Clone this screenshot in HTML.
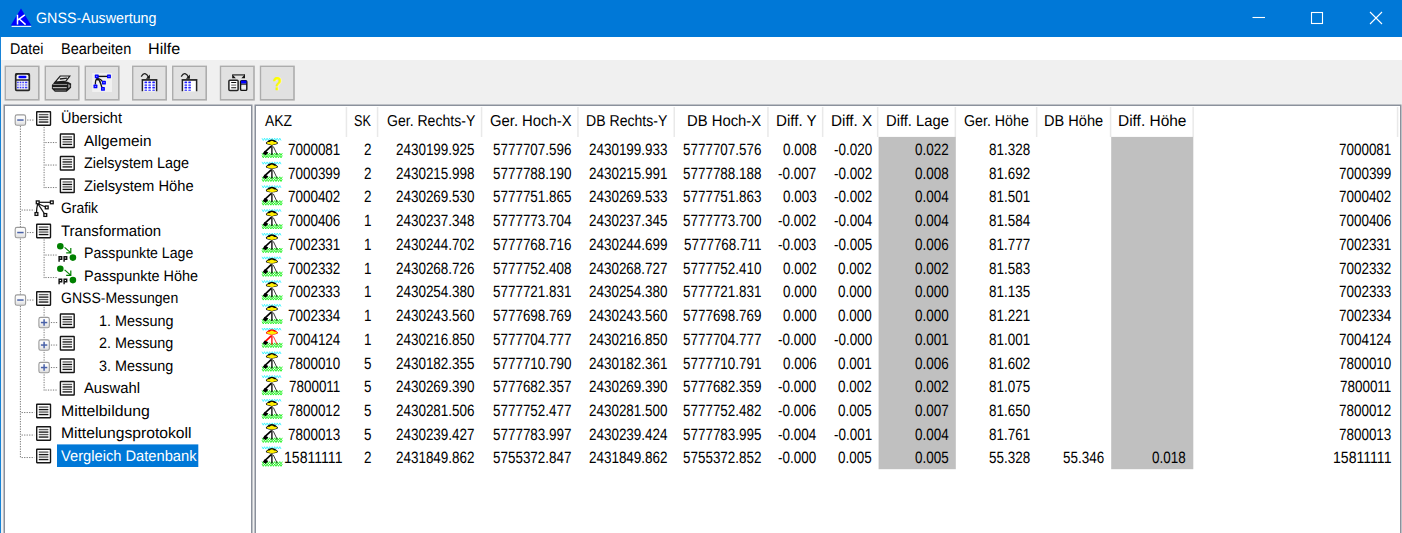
<!DOCTYPE html>
<html><head><meta charset="utf-8"><title>GNSS-Auswertung</title>
<style>
html,body{margin:0;padding:0}
body{width:1402px;height:533px;position:relative;overflow:hidden;background:#fff;font-family:"Liberation Sans", sans-serif;}
.a{position:absolute}
.t{position:absolute;white-space:pre;line-height:1;font-family:"Liberation Sans", sans-serif;}
svg{position:absolute;overflow:visible}
</style></head><body>
<div class="a" style="left:0;top:0;width:1402px;height:37px;background:#0078d7"></div>
<div class="a" style="left:0;top:37px;width:1px;height:496px;background:#1883d7"></div>
<div class="a" style="left:1px;top:37px;width:1401px;height:23px;background:#fff"></div>
<div class="a" style="left:1px;top:60px;width:1401px;height:473px;background:#f0f0f0"></div>
<svg class="a" style="left:0;top:0" width="1402" height="533" viewBox="0 0 1402 533">
<rect x="4.6" y="65.6" width="35" height="35" fill="#adadad"/><rect x="6.0" y="67" width="32" height="32" fill="#e1e1e1"/>
<rect x="44.6" y="65.6" width="35" height="35" fill="#adadad"/><rect x="46.0" y="67" width="32" height="32" fill="#e1e1e1"/>
<rect x="84.6" y="65.6" width="35" height="35" fill="#adadad"/><rect x="86.0" y="67" width="32" height="32" fill="#e1e1e1"/>
<rect x="132.0" y="65.6" width="35" height="35" fill="#adadad"/><rect x="133.4" y="67" width="32" height="32" fill="#e1e1e1"/>
<rect x="172.0" y="65.6" width="35" height="35" fill="#adadad"/><rect x="173.4" y="67" width="32" height="32" fill="#e1e1e1"/>
<rect x="219.8" y="65.6" width="35" height="35" fill="#adadad"/><rect x="221.2" y="67" width="32" height="32" fill="#e1e1e1"/>
<rect x="259.8" y="65.6" width="35" height="35" fill="#adadad"/><rect x="261.2" y="67" width="32" height="32" fill="#e1e1e1"/>
<rect x="4.25" y="105.25" width="247.5" height="440" fill="#fff" stroke="#8b919c" stroke-width="1.5"/>
<rect x="255.25" y="105.25" width="1145.5" height="440" fill="#fff" stroke="#8b919c" stroke-width="1.5"/>
<rect x="57" y="444.4" width="141.3" height="22.6" fill="#0078d7"/>
</svg>
<svg class="a" style="left:0;top:0" width="1402" height="533" viewBox="0 0 1402 533"><rect x="345.7" y="107" width="1.5" height="30" fill="#e9e9e9"/><rect x="376.8" y="107" width="1.5" height="30" fill="#e9e9e9"/><rect x="480.8" y="107" width="1.5" height="30" fill="#e9e9e9"/><rect x="577.2" y="107" width="1.5" height="30" fill="#e9e9e9"/><rect x="673.5" y="107" width="1.5" height="30" fill="#e9e9e9"/><rect x="767.2" y="107" width="1.5" height="30" fill="#e9e9e9"/><rect x="821.9" y="107" width="1.5" height="30" fill="#e9e9e9"/><rect x="876.9" y="107" width="1.5" height="30" fill="#e9e9e9"/><rect x="954.6" y="107" width="1.5" height="30" fill="#e9e9e9"/><rect x="1035.9" y="107" width="1.5" height="30" fill="#e9e9e9"/><rect x="1109.8" y="107" width="1.5" height="30" fill="#e9e9e9"/><rect x="1192.4" y="107" width="1.5" height="30" fill="#e9e9e9"/><rect x="1396.8" y="107" width="1.5" height="30" fill="#e9e9e9"/></svg>
<svg class="a" style="left:0;top:0" width="1402" height="533" viewBox="0 0 1402 533"><rect x="878.6" y="136.9" width="77.2" height="332.3" fill="#c0c0c0"/><rect x="1111.2" y="136.9" width="82.1" height="332.3" fill="#c0c0c0"/></svg>
<svg class="a" style="left:0;top:0" width="1402" height="533" viewBox="0 0 1402 533">
<defs><linearGradient id="eg" x1="0" y1="0" x2="0" y2="1"><stop offset="0" stop-color="#fff"/><stop offset="0.5" stop-color="#f6f6f6"/><stop offset="1" stop-color="#dcdcdc"/></linearGradient></defs>
<g><polygon points="21,8.6 31.3,25.6 10.7,25.6" fill="#0000ff"/><rect x="11.6" y="25.9" width="19.6" height="1" fill="#fff"/><path d="M17.5,14.8 V24.6 M17.7,20.2 L24.8,14.8 M19.6,19.2 L25.6,24.6" stroke="#fff" stroke-width="1.5" fill="none"/></g>
<g stroke="#fff" stroke-width="1.1" fill="none"><path d="M1252.5,17.5 H1265"/><rect x="1311.5" y="12.5" width="11" height="11"/><path d="M1370,12 L1382,24 M1382,12 L1370,24"/></g>
<g><rect x="15.7" y="73.9" width="13.6" height="16.4" rx="0.9" fill="#f3f3f6" stroke="#262626" stroke-width="1.7"/><path d="M15.6,73.4 h3 l-3,3.2 z M29.4,73.4 h-3 l3,3.2 z" fill="#262626"/><rect x="18.4" y="75.7" width="8.1" height="2.6" rx="1.2" fill="#0000ff"/><path d="M15.6,80 H29.4" stroke="#262626" stroke-width="1.5"/><rect x="17.1" y="81.7" width="1.6" height="1.5" fill="#2222ff" opacity="0.90"/><rect x="19.7" y="81.7" width="1.6" height="1.5" fill="#2222ff" opacity="0.90"/><rect x="22.3" y="81.7" width="1.6" height="1.5" fill="#2222ff" opacity="0.90"/><rect x="24.9" y="81.7" width="2.4" height="1.5" fill="#2222ff" opacity="0.90"/><rect x="17.1" y="84.2" width="1.6" height="1.5" fill="#2222ff" opacity="0.55"/><rect x="19.7" y="84.2" width="1.6" height="1.5" fill="#2222ff" opacity="0.55"/><rect x="22.3" y="84.2" width="1.6" height="1.5" fill="#2222ff" opacity="0.55"/><rect x="24.9" y="84.2" width="2.4" height="1.5" fill="#2222ff" opacity="0.55"/><rect x="17.1" y="86.8" width="1.6" height="1.5" fill="#2222ff" opacity="0.90"/><rect x="19.7" y="86.8" width="1.6" height="1.5" fill="#2222ff" opacity="0.90"/><rect x="22.3" y="86.8" width="1.6" height="1.5" fill="#2222ff" opacity="0.90"/><rect x="24.9" y="86.8" width="2.4" height="1.5" fill="#2222ff" opacity="0.90"/></g>
<g><polygon points="54.9,81.8 67.7,81.8 71.1,83.6 71.1,87.7 66.7,91.7 54.9,91.7 51.9,88.7 51.9,85.0" fill="#1c1c1c"/><polygon points="60.2,76.0 69.8,76.0 65.9,81.2 55.0,82.2" fill="#e8e8e8" stroke="#1c1c1c" stroke-width="1.2"/><path d="M59.8,79.0 L67.0,78.2" stroke="#1c1c1c" stroke-width="1.3"/><path d="M53.2,84.5 L67.2,84.5" stroke="#8e8e8e" stroke-width="1.1"/><path d="M52.8,87.7 L66.8,87.7" stroke="#f2f2f2" stroke-width="0.9"/><path d="M54.7,90.2 L66.1,90.2" stroke="#777" stroke-width="0.8"/><polygon points="68.1,83.9 70.2,84.9 70.2,87.1 68.1,88.2" fill="#8a8a8a"/></g>
<g><rect x="92.2" y="73" width="19.8" height="19" fill="#f0f0f0"/><path d="M96.7,76.4 H109.0" stroke="#111" stroke-width="1.4"/><path d="M97.6,78.6 Q100.8,78.6 102.6,81.8" stroke="#111" stroke-width="1.2" fill="none"/><path d="M96.8,78.8 Q95.3,80 95.4,84.6" stroke="#111" stroke-width="1.3" fill="none"/><path d="M97.4,78.6 Q100,80.5 101,84.5 T102.6,87.5" stroke="#111" stroke-width="1.3" fill="none"/><circle cx="97.2" cy="79.2" r="1.2" fill="#111"/><rect x="94.8" y="74.6" width="3.9" height="3.7" rx="0.6" fill="#0000ff"/><rect x="96.0" y="75.9" width="1.3" height="1" fill="#8a8aff"/><rect x="107.0" y="74.6" width="3.9" height="3.7" rx="0.6" fill="#0000ff"/><rect x="108.3" y="75.9" width="1.3" height="1" fill="#8a8aff"/><rect x="102.0" y="80.8" width="3.9" height="3.7" rx="0.6" fill="#0000ff"/><rect x="103.3" y="82.1" width="1.3" height="1" fill="#8a8aff"/><rect x="93.5" y="84.6" width="3.9" height="3.7" rx="0.6" fill="#0000ff"/><rect x="94.8" y="85.9" width="1.3" height="1" fill="#8a8aff"/><rect x="101.0" y="87.1" width="3.9" height="3.7" rx="0.6" fill="#0000ff"/><rect x="102.2" y="88.4" width="1.3" height="1" fill="#8a8aff"/></g>
<g><rect x="142.3" y="80" width="14.2" height="11.4" fill="#fff"/><path d="M142.4,91.2 V80 H156.6 V91.2" stroke="#222" stroke-width="1.5" fill="none"/><path d="M141.8,79.6 H157.2" stroke="#222" stroke-width="0.8"/><rect x="144.5" y="81.6" width="2.6" height="1.7" rx="0.5" fill="#1111ff" opacity="0.95"/><rect x="144.5" y="84.2" width="2.6" height="1.7" rx="0.5" fill="#1111ff" opacity="0.70"/><rect x="144.5" y="86.8" width="2.6" height="1.7" rx="0.5" fill="#1111ff" opacity="0.95"/><rect x="144.5" y="89.4" width="2.6" height="1.7" rx="0.5" fill="#1111ff" opacity="0.70"/><rect x="148.3" y="81.6" width="2.6" height="1.7" rx="0.5" fill="#1111ff" opacity="0.95"/><rect x="148.3" y="84.2" width="2.6" height="1.7" rx="0.5" fill="#1111ff" opacity="0.70"/><rect x="148.3" y="86.8" width="2.6" height="1.7" rx="0.5" fill="#1111ff" opacity="0.95"/><rect x="148.3" y="89.4" width="2.6" height="1.7" rx="0.5" fill="#1111ff" opacity="0.70"/><rect x="152.3" y="81.6" width="2.6" height="1.7" rx="0.5" fill="#1111ff" opacity="0.95"/><rect x="152.3" y="84.2" width="2.6" height="1.7" rx="0.5" fill="#1111ff" opacity="0.70"/><rect x="152.3" y="86.8" width="2.6" height="1.7" rx="0.5" fill="#1111ff" opacity="0.95"/><rect x="152.3" y="89.4" width="2.6" height="1.7" rx="0.5" fill="#1111ff" opacity="0.70"/><path d="M141.2,76.6 Q143.2,73.2 145.0,73.7 Q147.2,74.3 148.4,77.2" stroke="#222" stroke-width="1.25" fill="none"/><polygon points="149.9,74.6 149.9,78.7 145.9,78.7" fill="#111"/></g>
<g><rect x="182.3" y="80" width="14.2" height="11.4" fill="#fff"/><path d="M182.4,91.2 V80 H196.6 V91.2" stroke="#222" stroke-width="1.5" fill="none"/><path d="M181.8,79.6 H197.2" stroke="#222" stroke-width="0.8"/><rect x="184.5" y="81.6" width="2.6" height="1.7" rx="0.5" fill="#1111ff" opacity="0.95"/><rect x="184.5" y="84.2" width="2.6" height="1.7" rx="0.5" fill="#1111ff" opacity="0.70"/><rect x="184.5" y="86.8" width="2.6" height="1.7" rx="0.5" fill="#1111ff" opacity="0.95"/><rect x="184.5" y="89.4" width="2.6" height="1.7" rx="0.5" fill="#1111ff" opacity="0.70"/><rect x="188.3" y="81.6" width="2.6" height="1.7" rx="0.5" fill="#1111ff" opacity="0.95"/><rect x="188.3" y="84.2" width="2.6" height="1.7" rx="0.5" fill="#1111ff" opacity="0.70"/><rect x="188.3" y="86.8" width="2.6" height="1.7" rx="0.5" fill="#1111ff" opacity="0.95"/><rect x="188.3" y="89.4" width="2.6" height="1.7" rx="0.5" fill="#1111ff" opacity="0.70"/><path d="M181.2,76.6 Q183.2,73.2 185.0,73.7 Q187.2,74.3 188.4,77.2" stroke="#222" stroke-width="1.25" fill="none"/><polygon points="189.9,74.6 189.9,78.7 185.9,78.7" fill="#111"/></g>
<g><rect x="228.9" y="80.2" width="9.2" height="10.2" rx="1" fill="#fff" stroke="#222" stroke-width="1.5"/><path d="M231.2,82.5 H236.2 M231.2,87.7 H236.2" stroke="#111" stroke-width="1.1"/><path d="M231.2,85.1 H236.2" stroke="#777" stroke-width="1.2"/><rect x="240.6" y="80.6" width="6.2" height="9.8" rx="1.2" fill="#e6e6e6" stroke="#111" stroke-width="1.4"/><rect x="241" y="80.6" width="5.4" height="3" fill="#0000ff"/><path d="M240.6,84.2 H246.8" stroke="#111" stroke-width="1"/><path d="M241.4,87.2 H246" stroke="#fff" stroke-width="0.8"/><path d="M232.4,74.9 H245" stroke="#333" stroke-width="1.3"/><polygon points="232.2,74.2 232.2,78.2 235.8,78.2" fill="#111"/><polygon points="245,74.2 245,78.2 241.4,78.2" fill="#111"/></g>
<g><path d="M20.4,126.0 V458.1" stroke="#787878" stroke-width="1" stroke-dasharray="1.25 1.25" fill="none"/><path d="M44.1,126.9 V188.1" stroke="#787878" stroke-width="1" stroke-dasharray="1.25 1.25" fill="none"/><path d="M44.1,239.4 V278.1" stroke="#787878" stroke-width="1" stroke-dasharray="1.25 1.25" fill="none"/><path d="M44.1,306.9 V390.6" stroke="#787878" stroke-width="1" stroke-dasharray="1.25 1.25" fill="none"/><path d="M27.2,120.05 H34.3" stroke="#787878" stroke-width="1" stroke-dasharray="1.25 1.25" fill="none"/><path d="M21.6,210.05 H34.3" stroke="#787878" stroke-width="1" stroke-dasharray="1.25 1.25" fill="none"/><path d="M27.2,232.55 H34.3" stroke="#787878" stroke-width="1" stroke-dasharray="1.25 1.25" fill="none"/><path d="M27.2,300.05 H34.3" stroke="#787878" stroke-width="1" stroke-dasharray="1.25 1.25" fill="none"/><path d="M21.6,412.55 H34.3" stroke="#787878" stroke-width="1" stroke-dasharray="1.25 1.25" fill="none"/><path d="M21.6,435.05 H34.3" stroke="#787878" stroke-width="1" stroke-dasharray="1.25 1.25" fill="none"/><path d="M21.6,457.55 H34.3" stroke="#787878" stroke-width="1" stroke-dasharray="1.25 1.25" fill="none"/><path d="M45.4,142.55 H57.8" stroke="#787878" stroke-width="1" stroke-dasharray="1.25 1.25" fill="none"/><path d="M45.4,165.05 H57.8" stroke="#787878" stroke-width="1" stroke-dasharray="1.25 1.25" fill="none"/><path d="M45.4,187.55 H57.8" stroke="#787878" stroke-width="1" stroke-dasharray="1.25 1.25" fill="none"/><path d="M45.4,255.05 H57.8" stroke="#787878" stroke-width="1" stroke-dasharray="1.25 1.25" fill="none"/><path d="M45.4,277.55 H57.8" stroke="#787878" stroke-width="1" stroke-dasharray="1.25 1.25" fill="none"/><path d="M45.4,390.05 H57.8" stroke="#787878" stroke-width="1" stroke-dasharray="1.25 1.25" fill="none"/><path d="M50.9,322.55 H57.8" stroke="#787878" stroke-width="1" stroke-dasharray="1.25 1.25" fill="none"/><path d="M50.9,345.05 H57.8" stroke="#787878" stroke-width="1" stroke-dasharray="1.25 1.25" fill="none"/><path d="M50.9,367.55 H57.8" stroke="#787878" stroke-width="1" stroke-dasharray="1.25 1.25" fill="none"/><rect x="15.20" y="114.85" width="10.4" height="10.4" rx="1.8" fill="url(#eg)" stroke="#9a9a9a" stroke-width="1.1"/><path d="M17.20,120.05 H23.60" stroke="#4a62a8" stroke-width="1.5"/><rect x="15.20" y="227.35" width="10.4" height="10.4" rx="1.8" fill="url(#eg)" stroke="#9a9a9a" stroke-width="1.1"/><path d="M17.20,232.55 H23.60" stroke="#4a62a8" stroke-width="1.5"/><rect x="15.20" y="294.85" width="10.4" height="10.4" rx="1.8" fill="url(#eg)" stroke="#9a9a9a" stroke-width="1.1"/><path d="M17.20,300.05 H23.60" stroke="#4a62a8" stroke-width="1.5"/><rect x="38.90" y="317.35" width="10.4" height="10.4" rx="1.8" fill="url(#eg)" stroke="#9a9a9a" stroke-width="1.1"/><path d="M40.90,322.55 H47.30" stroke="#4a62a8" stroke-width="1.5"/><path d="M44.10,319.35 V325.75" stroke="#4a62a8" stroke-width="1.5"/><rect x="38.90" y="339.85" width="10.4" height="10.4" rx="1.8" fill="url(#eg)" stroke="#9a9a9a" stroke-width="1.1"/><path d="M40.90,345.05 H47.30" stroke="#4a62a8" stroke-width="1.5"/><path d="M44.10,341.85 V348.25" stroke="#4a62a8" stroke-width="1.5"/><rect x="38.90" y="362.35" width="10.4" height="10.4" rx="1.8" fill="url(#eg)" stroke="#9a9a9a" stroke-width="1.1"/><path d="M40.90,367.55 H47.30" stroke="#4a62a8" stroke-width="1.5"/><path d="M44.10,364.35 V370.75" stroke="#4a62a8" stroke-width="1.5"/><rect x="36.70" y="111.70" width="13.8" height="13.5" rx="0.35" fill="#fff" stroke="#161616" stroke-width="1.4"/><path d="M38.80,114.60 H48.40" stroke="#5a5a5a" stroke-width="1.35"/><path d="M38.80,117.10 H48.40" stroke="#161616" stroke-width="1.35"/><path d="M38.80,119.55 H48.40" stroke="#5a5a5a" stroke-width="1.35"/><path d="M38.80,122.05 H48.40" stroke="#161616" stroke-width="1.35"/><rect x="36.70" y="224.20" width="13.8" height="13.5" rx="0.35" fill="#fff" stroke="#161616" stroke-width="1.4"/><path d="M38.80,227.10 H48.40" stroke="#5a5a5a" stroke-width="1.35"/><path d="M38.80,229.60 H48.40" stroke="#161616" stroke-width="1.35"/><path d="M38.80,232.05 H48.40" stroke="#5a5a5a" stroke-width="1.35"/><path d="M38.80,234.55 H48.40" stroke="#161616" stroke-width="1.35"/><rect x="36.70" y="291.70" width="13.8" height="13.5" rx="0.35" fill="#fff" stroke="#161616" stroke-width="1.4"/><path d="M38.80,294.60 H48.40" stroke="#5a5a5a" stroke-width="1.35"/><path d="M38.80,297.10 H48.40" stroke="#161616" stroke-width="1.35"/><path d="M38.80,299.55 H48.40" stroke="#5a5a5a" stroke-width="1.35"/><path d="M38.80,302.05 H48.40" stroke="#161616" stroke-width="1.35"/><rect x="36.70" y="404.20" width="13.8" height="13.5" rx="0.35" fill="#fff" stroke="#161616" stroke-width="1.4"/><path d="M38.80,407.10 H48.40" stroke="#5a5a5a" stroke-width="1.35"/><path d="M38.80,409.60 H48.40" stroke="#161616" stroke-width="1.35"/><path d="M38.80,412.05 H48.40" stroke="#5a5a5a" stroke-width="1.35"/><path d="M38.80,414.55 H48.40" stroke="#161616" stroke-width="1.35"/><rect x="36.70" y="426.70" width="13.8" height="13.5" rx="0.35" fill="#fff" stroke="#161616" stroke-width="1.4"/><path d="M38.80,429.60 H48.40" stroke="#5a5a5a" stroke-width="1.35"/><path d="M38.80,432.10 H48.40" stroke="#161616" stroke-width="1.35"/><path d="M38.80,434.55 H48.40" stroke="#5a5a5a" stroke-width="1.35"/><path d="M38.80,437.05 H48.40" stroke="#161616" stroke-width="1.35"/><rect x="36.70" y="449.20" width="13.8" height="13.5" rx="0.35" fill="#fff" stroke="#161616" stroke-width="1.4"/><path d="M38.80,452.10 H48.40" stroke="#5a5a5a" stroke-width="1.35"/><path d="M38.80,454.60 H48.40" stroke="#161616" stroke-width="1.35"/><path d="M38.80,457.05 H48.40" stroke="#5a5a5a" stroke-width="1.35"/><path d="M38.80,459.55 H48.40" stroke="#161616" stroke-width="1.35"/><rect x="60.40" y="134.05" width="13.8" height="13.5" rx="0.35" fill="#fff" stroke="#161616" stroke-width="1.4"/><path d="M62.50,136.95 H72.10" stroke="#5a5a5a" stroke-width="1.35"/><path d="M62.50,139.45 H72.10" stroke="#161616" stroke-width="1.35"/><path d="M62.50,141.90 H72.10" stroke="#5a5a5a" stroke-width="1.35"/><path d="M62.50,144.40 H72.10" stroke="#161616" stroke-width="1.35"/><rect x="60.40" y="156.55" width="13.8" height="13.5" rx="0.35" fill="#fff" stroke="#161616" stroke-width="1.4"/><path d="M62.50,159.45 H72.10" stroke="#5a5a5a" stroke-width="1.35"/><path d="M62.50,161.95 H72.10" stroke="#161616" stroke-width="1.35"/><path d="M62.50,164.40 H72.10" stroke="#5a5a5a" stroke-width="1.35"/><path d="M62.50,166.90 H72.10" stroke="#161616" stroke-width="1.35"/><rect x="60.40" y="179.05" width="13.8" height="13.5" rx="0.35" fill="#fff" stroke="#161616" stroke-width="1.4"/><path d="M62.50,181.95 H72.10" stroke="#5a5a5a" stroke-width="1.35"/><path d="M62.50,184.45 H72.10" stroke="#161616" stroke-width="1.35"/><path d="M62.50,186.90 H72.10" stroke="#5a5a5a" stroke-width="1.35"/><path d="M62.50,189.40 H72.10" stroke="#161616" stroke-width="1.35"/><rect x="60.40" y="314.05" width="13.8" height="13.5" rx="0.35" fill="#fff" stroke="#161616" stroke-width="1.4"/><path d="M62.50,316.95 H72.10" stroke="#5a5a5a" stroke-width="1.35"/><path d="M62.50,319.45 H72.10" stroke="#161616" stroke-width="1.35"/><path d="M62.50,321.90 H72.10" stroke="#5a5a5a" stroke-width="1.35"/><path d="M62.50,324.40 H72.10" stroke="#161616" stroke-width="1.35"/><rect x="60.40" y="336.55" width="13.8" height="13.5" rx="0.35" fill="#fff" stroke="#161616" stroke-width="1.4"/><path d="M62.50,339.45 H72.10" stroke="#5a5a5a" stroke-width="1.35"/><path d="M62.50,341.95 H72.10" stroke="#161616" stroke-width="1.35"/><path d="M62.50,344.40 H72.10" stroke="#5a5a5a" stroke-width="1.35"/><path d="M62.50,346.90 H72.10" stroke="#161616" stroke-width="1.35"/><rect x="60.40" y="359.05" width="13.8" height="13.5" rx="0.35" fill="#fff" stroke="#161616" stroke-width="1.4"/><path d="M62.50,361.95 H72.10" stroke="#5a5a5a" stroke-width="1.35"/><path d="M62.50,364.45 H72.10" stroke="#161616" stroke-width="1.35"/><path d="M62.50,366.90 H72.10" stroke="#5a5a5a" stroke-width="1.35"/><path d="M62.50,369.40 H72.10" stroke="#161616" stroke-width="1.35"/><rect x="60.40" y="381.55" width="13.8" height="13.5" rx="0.35" fill="#fff" stroke="#161616" stroke-width="1.4"/><path d="M62.50,384.45 H72.10" stroke="#5a5a5a" stroke-width="1.35"/><path d="M62.50,386.95 H72.10" stroke="#161616" stroke-width="1.35"/><path d="M62.50,389.40 H72.10" stroke="#5a5a5a" stroke-width="1.35"/><path d="M62.50,391.90 H72.10" stroke="#161616" stroke-width="1.35"/><path d="M37.7,202.3 L51.8,202.3" stroke="#111" stroke-width="1.2"/><path d="M38.2,203.8 L46.7,207.4" stroke="#111" stroke-width="1.1"/><path d="M38.0,203.8 L45.3,215.0" stroke="#111" stroke-width="1.2"/><path d="M37.7,203.8 Q36.6,207.3 36.4,214.0" stroke="#111" stroke-width="1.2" fill="none"/><rect x="36.30" y="200.93" width="2.8" height="2.8" fill="#fff" stroke="#111" stroke-width="1.3"/><rect x="50.41" y="200.93" width="2.8" height="2.8" fill="#fff" stroke="#111" stroke-width="1.3"/><rect x="45.34" y="206.00" width="2.8" height="2.8" fill="#fff" stroke="#111" stroke-width="1.3"/><rect x="35.04" y="212.59" width="2.8" height="2.8" fill="#fff" stroke="#111" stroke-width="1.3"/><rect x="43.90" y="213.60" width="2.8" height="2.8" fill="#fff" stroke="#111" stroke-width="1.3"/><circle cx="60.3" cy="246.30" r="3.3" fill="#008000"/><circle cx="72.9" cy="257.60" r="3.3" fill="#008000"/><path d="M64.6,247.40 L70.6,252.60 M70.8,248.00 V252.80 H66.2" stroke="#008000" stroke-width="1.2" fill="none"/><path d="M59.10,261.80 V256.70 H61.70 V259.30 H59.10" stroke="#111" stroke-width="1.4" fill="none"/><path d="M64.10,261.80 V256.70 H66.70 V259.30 H64.10" stroke="#111" stroke-width="1.4" fill="none"/><circle cx="60.3" cy="268.80" r="3.3" fill="#008000"/><circle cx="72.9" cy="280.10" r="3.3" fill="#008000"/><path d="M64.6,269.90 L70.6,275.10 M70.8,270.50 V275.30 H66.2" stroke="#008000" stroke-width="1.2" fill="none"/><path d="M59.10,284.30 V279.20 H61.70 V281.80 H59.10" stroke="#111" stroke-width="1.4" fill="none"/><path d="M64.10,284.30 V279.20 H66.70 V281.80 H64.10" stroke="#111" stroke-width="1.4" fill="none"/></g>
<g><polyline points="262.0,138.2 263.3,140.5 264.5,138.2 265.8,140.5 267.1,138.2 268.3,140.5 269.6,138.2 270.9,140.5 272.2,138.2 273.4,140.5 274.7,138.2 276.0,140.5 277.2,138.2 278.5,140.5 279.8,138.2 281.0,140.5" stroke="#00f0ff" stroke-width="0.9" fill="none" opacity="0.75"/><polyline points="262.0,153.1 263.3,155.4 264.5,153.1 265.8,155.4 267.1,153.1 268.3,155.4 269.6,153.1 270.9,155.4 272.2,153.1 273.4,155.4 274.7,153.1 276.0,155.4 277.2,153.1 278.5,155.4 279.8,153.1 281.0,155.4 282.3,153.1" stroke="#00f000" stroke-width="0.8" fill="none"/><polyline points="262.0,155.5 263.3,157.8 264.5,155.5 265.8,157.8 267.1,155.5 268.3,157.8 269.6,155.5 270.9,157.8 272.2,155.5 273.4,157.8 274.7,155.5 276.0,157.8 277.2,155.5 278.5,157.8 279.8,155.5 281.0,157.8 282.3,155.5" stroke="#00f000" stroke-width="0.8" fill="none"/><path d="M265.8,142.7 Q271.9,136.1 278,142.7 L277.4,144.0 Q271.9,145.9 266.4,144.0 z" fill="#000"/><ellipse cx="271.9" cy="143.0" rx="5.2" ry="1.25" fill="#ffee00"/><circle cx="271.9" cy="142.9" r="2.1" fill="#ffee00"/><path d="M271.9,145.1 V154.9" stroke="#000" stroke-width="1.3"/><path d="M271.2,146.1 L264.4,152.5" stroke="#000" stroke-width="1.7"/><path d="M273.3,146.5 L277.3,154.9" stroke="#000" stroke-width="0.9" opacity="0.85"/><polygon points="264.8,150.7 268.4,152.5 265.6,155.3 262.7,153.5" fill="#000"/><polyline points="262.0,161.9 263.3,164.2 264.5,161.9 265.8,164.2 267.1,161.9 268.3,164.2 269.6,161.9 270.9,164.2 272.2,161.9 273.4,164.2 274.7,161.9 276.0,164.2 277.2,161.9 278.5,164.2 279.8,161.9 281.0,164.2" stroke="#00f0ff" stroke-width="0.9" fill="none" opacity="0.75"/><polyline points="262.0,176.8 263.3,179.1 264.5,176.8 265.8,179.1 267.1,176.8 268.3,179.1 269.6,176.8 270.9,179.1 272.2,176.8 273.4,179.1 274.7,176.8 276.0,179.1 277.2,176.8 278.5,179.1 279.8,176.8 281.0,179.1 282.3,176.8" stroke="#00f000" stroke-width="0.8" fill="none"/><polyline points="262.0,179.2 263.3,181.5 264.5,179.2 265.8,181.5 267.1,179.2 268.3,181.5 269.6,179.2 270.9,181.5 272.2,179.2 273.4,181.5 274.7,179.2 276.0,181.5 277.2,179.2 278.5,181.5 279.8,179.2 281.0,181.5 282.3,179.2" stroke="#00f000" stroke-width="0.8" fill="none"/><path d="M265.8,166.4 Q271.9,159.8 278,166.4 L277.4,167.7 Q271.9,169.6 266.4,167.7 z" fill="#000"/><ellipse cx="271.9" cy="166.7" rx="5.2" ry="1.25" fill="#ffee00"/><circle cx="271.9" cy="166.6" r="2.1" fill="#ffee00"/><path d="M271.9,168.8 V178.6" stroke="#000" stroke-width="1.3"/><path d="M271.2,169.8 L264.4,176.2" stroke="#000" stroke-width="1.7"/><path d="M273.3,170.2 L277.3,178.6" stroke="#000" stroke-width="0.9" opacity="0.85"/><polygon points="264.8,174.4 268.4,176.2 265.6,179.0 262.7,177.2" fill="#000"/><polyline points="262.0,185.6 263.3,187.9 264.5,185.6 265.8,187.9 267.1,185.6 268.3,187.9 269.6,185.6 270.9,187.9 272.2,185.6 273.4,187.9 274.7,185.6 276.0,187.9 277.2,185.6 278.5,187.9 279.8,185.6 281.0,187.9" stroke="#00f0ff" stroke-width="0.9" fill="none" opacity="0.75"/><polyline points="262.0,200.5 263.3,202.8 264.5,200.5 265.8,202.8 267.1,200.5 268.3,202.8 269.6,200.5 270.9,202.8 272.2,200.5 273.4,202.8 274.7,200.5 276.0,202.8 277.2,200.5 278.5,202.8 279.8,200.5 281.0,202.8 282.3,200.5" stroke="#00f000" stroke-width="0.8" fill="none"/><polyline points="262.0,202.9 263.3,205.2 264.5,202.9 265.8,205.2 267.1,202.9 268.3,205.2 269.6,202.9 270.9,205.2 272.2,202.9 273.4,205.2 274.7,202.9 276.0,205.2 277.2,202.9 278.5,205.2 279.8,202.9 281.0,205.2 282.3,202.9" stroke="#00f000" stroke-width="0.8" fill="none"/><path d="M265.8,190.1 Q271.9,183.5 278,190.1 L277.4,191.4 Q271.9,193.3 266.4,191.4 z" fill="#000"/><ellipse cx="271.9" cy="190.4" rx="5.2" ry="1.25" fill="#ffee00"/><circle cx="271.9" cy="190.3" r="2.1" fill="#ffee00"/><path d="M271.9,192.5 V202.3" stroke="#000" stroke-width="1.3"/><path d="M271.2,193.5 L264.4,199.9" stroke="#000" stroke-width="1.7"/><path d="M273.3,193.9 L277.3,202.3" stroke="#000" stroke-width="0.9" opacity="0.85"/><polygon points="264.8,198.1 268.4,199.9 265.6,202.7 262.7,200.9" fill="#000"/><polyline points="262.0,209.4 263.3,211.7 264.5,209.4 265.8,211.7 267.1,209.4 268.3,211.7 269.6,209.4 270.9,211.7 272.2,209.4 273.4,211.7 274.7,209.4 276.0,211.7 277.2,209.4 278.5,211.7 279.8,209.4 281.0,211.7" stroke="#00f0ff" stroke-width="0.9" fill="none" opacity="0.75"/><polyline points="262.0,224.3 263.3,226.6 264.5,224.3 265.8,226.6 267.1,224.3 268.3,226.6 269.6,224.3 270.9,226.6 272.2,224.3 273.4,226.6 274.7,224.3 276.0,226.6 277.2,224.3 278.5,226.6 279.8,224.3 281.0,226.6 282.3,224.3" stroke="#00f000" stroke-width="0.8" fill="none"/><polyline points="262.0,226.7 263.3,229.0 264.5,226.7 265.8,229.0 267.1,226.7 268.3,229.0 269.6,226.7 270.9,229.0 272.2,226.7 273.4,229.0 274.7,226.7 276.0,229.0 277.2,226.7 278.5,229.0 279.8,226.7 281.0,229.0 282.3,226.7" stroke="#00f000" stroke-width="0.8" fill="none"/><path d="M265.8,213.9 Q271.9,207.3 278,213.9 L277.4,215.2 Q271.9,217.1 266.4,215.2 z" fill="#000"/><ellipse cx="271.9" cy="214.2" rx="5.2" ry="1.25" fill="#ffee00"/><circle cx="271.9" cy="214.1" r="2.1" fill="#ffee00"/><path d="M271.9,216.3 V226.1" stroke="#000" stroke-width="1.3"/><path d="M271.2,217.3 L264.4,223.7" stroke="#000" stroke-width="1.7"/><path d="M273.3,217.7 L277.3,226.1" stroke="#000" stroke-width="0.9" opacity="0.85"/><polygon points="264.8,221.9 268.4,223.7 265.6,226.5 262.7,224.7" fill="#000"/><polyline points="262.0,233.1 263.3,235.4 264.5,233.1 265.8,235.4 267.1,233.1 268.3,235.4 269.6,233.1 270.9,235.4 272.2,233.1 273.4,235.4 274.7,233.1 276.0,235.4 277.2,233.1 278.5,235.4 279.8,233.1 281.0,235.4" stroke="#00f0ff" stroke-width="0.9" fill="none" opacity="0.75"/><polyline points="262.0,248.0 263.3,250.3 264.5,248.0 265.8,250.3 267.1,248.0 268.3,250.3 269.6,248.0 270.9,250.3 272.2,248.0 273.4,250.3 274.7,248.0 276.0,250.3 277.2,248.0 278.5,250.3 279.8,248.0 281.0,250.3 282.3,248.0" stroke="#00f000" stroke-width="0.8" fill="none"/><polyline points="262.0,250.4 263.3,252.7 264.5,250.4 265.8,252.7 267.1,250.4 268.3,252.7 269.6,250.4 270.9,252.7 272.2,250.4 273.4,252.7 274.7,250.4 276.0,252.7 277.2,250.4 278.5,252.7 279.8,250.4 281.0,252.7 282.3,250.4" stroke="#00f000" stroke-width="0.8" fill="none"/><path d="M265.8,237.6 Q271.9,231.0 278,237.6 L277.4,238.9 Q271.9,240.8 266.4,238.9 z" fill="#000"/><ellipse cx="271.9" cy="237.9" rx="5.2" ry="1.25" fill="#ffee00"/><circle cx="271.9" cy="237.8" r="2.1" fill="#ffee00"/><path d="M271.9,240.0 V249.8" stroke="#000" stroke-width="1.3"/><path d="M271.2,241.0 L264.4,247.4" stroke="#000" stroke-width="1.7"/><path d="M273.3,241.4 L277.3,249.8" stroke="#000" stroke-width="0.9" opacity="0.85"/><polygon points="264.8,245.6 268.4,247.4 265.6,250.2 262.7,248.4" fill="#000"/><polyline points="262.0,256.8 263.3,259.1 264.5,256.8 265.8,259.1 267.1,256.8 268.3,259.1 269.6,256.8 270.9,259.1 272.2,256.8 273.4,259.1 274.7,256.8 276.0,259.1 277.2,256.8 278.5,259.1 279.8,256.8 281.0,259.1" stroke="#00f0ff" stroke-width="0.9" fill="none" opacity="0.75"/><polyline points="262.0,271.7 263.3,274.0 264.5,271.7 265.8,274.0 267.1,271.7 268.3,274.0 269.6,271.7 270.9,274.0 272.2,271.7 273.4,274.0 274.7,271.7 276.0,274.0 277.2,271.7 278.5,274.0 279.8,271.7 281.0,274.0 282.3,271.7" stroke="#00f000" stroke-width="0.8" fill="none"/><polyline points="262.0,274.1 263.3,276.4 264.5,274.1 265.8,276.4 267.1,274.1 268.3,276.4 269.6,274.1 270.9,276.4 272.2,274.1 273.4,276.4 274.7,274.1 276.0,276.4 277.2,274.1 278.5,276.4 279.8,274.1 281.0,276.4 282.3,274.1" stroke="#00f000" stroke-width="0.8" fill="none"/><path d="M265.8,261.3 Q271.9,254.7 278,261.3 L277.4,262.6 Q271.9,264.5 266.4,262.6 z" fill="#000"/><ellipse cx="271.9" cy="261.6" rx="5.2" ry="1.25" fill="#ffee00"/><circle cx="271.9" cy="261.5" r="2.1" fill="#ffee00"/><path d="M271.9,263.7 V273.5" stroke="#000" stroke-width="1.3"/><path d="M271.2,264.7 L264.4,271.1" stroke="#000" stroke-width="1.7"/><path d="M273.3,265.1 L277.3,273.5" stroke="#000" stroke-width="0.9" opacity="0.85"/><polygon points="264.8,269.3 268.4,271.1 265.6,273.9 262.7,272.1" fill="#000"/><polyline points="262.0,280.5 263.3,282.8 264.5,280.5 265.8,282.8 267.1,280.5 268.3,282.8 269.6,280.5 270.9,282.8 272.2,280.5 273.4,282.8 274.7,280.5 276.0,282.8 277.2,280.5 278.5,282.8 279.8,280.5 281.0,282.8" stroke="#00f0ff" stroke-width="0.9" fill="none" opacity="0.75"/><polyline points="262.0,295.4 263.3,297.7 264.5,295.4 265.8,297.7 267.1,295.4 268.3,297.7 269.6,295.4 270.9,297.7 272.2,295.4 273.4,297.7 274.7,295.4 276.0,297.7 277.2,295.4 278.5,297.7 279.8,295.4 281.0,297.7 282.3,295.4" stroke="#00f000" stroke-width="0.8" fill="none"/><polyline points="262.0,297.8 263.3,300.1 264.5,297.8 265.8,300.1 267.1,297.8 268.3,300.1 269.6,297.8 270.9,300.1 272.2,297.8 273.4,300.1 274.7,297.8 276.0,300.1 277.2,297.8 278.5,300.1 279.8,297.8 281.0,300.1 282.3,297.8" stroke="#00f000" stroke-width="0.8" fill="none"/><path d="M265.8,285.0 Q271.9,278.4 278,285.0 L277.4,286.3 Q271.9,288.2 266.4,286.3 z" fill="#000"/><ellipse cx="271.9" cy="285.3" rx="5.2" ry="1.25" fill="#ffee00"/><circle cx="271.9" cy="285.2" r="2.1" fill="#ffee00"/><path d="M271.9,287.4 V297.2" stroke="#000" stroke-width="1.3"/><path d="M271.2,288.4 L264.4,294.8" stroke="#000" stroke-width="1.7"/><path d="M273.3,288.8 L277.3,297.2" stroke="#000" stroke-width="0.9" opacity="0.85"/><polygon points="264.8,293.0 268.4,294.8 265.6,297.6 262.7,295.8" fill="#000"/><polyline points="262.0,304.3 263.3,306.6 264.5,304.3 265.8,306.6 267.1,304.3 268.3,306.6 269.6,304.3 270.9,306.6 272.2,304.3 273.4,306.6 274.7,304.3 276.0,306.6 277.2,304.3 278.5,306.6 279.8,304.3 281.0,306.6" stroke="#00f0ff" stroke-width="0.9" fill="none" opacity="0.75"/><polyline points="262.0,319.2 263.3,321.5 264.5,319.2 265.8,321.5 267.1,319.2 268.3,321.5 269.6,319.2 270.9,321.5 272.2,319.2 273.4,321.5 274.7,319.2 276.0,321.5 277.2,319.2 278.5,321.5 279.8,319.2 281.0,321.5 282.3,319.2" stroke="#00f000" stroke-width="0.8" fill="none"/><polyline points="262.0,321.6 263.3,323.9 264.5,321.6 265.8,323.9 267.1,321.6 268.3,323.9 269.6,321.6 270.9,323.9 272.2,321.6 273.4,323.9 274.7,321.6 276.0,323.9 277.2,321.6 278.5,323.9 279.8,321.6 281.0,323.9 282.3,321.6" stroke="#00f000" stroke-width="0.8" fill="none"/><path d="M265.8,308.8 Q271.9,302.2 278,308.8 L277.4,310.1 Q271.9,312.0 266.4,310.1 z" fill="#000"/><ellipse cx="271.9" cy="309.1" rx="5.2" ry="1.25" fill="#ffee00"/><circle cx="271.9" cy="309.0" r="2.1" fill="#ffee00"/><path d="M271.9,311.2 V321.0" stroke="#000" stroke-width="1.3"/><path d="M271.2,312.2 L264.4,318.6" stroke="#000" stroke-width="1.7"/><path d="M273.3,312.6 L277.3,321.0" stroke="#000" stroke-width="0.9" opacity="0.85"/><polygon points="264.8,316.8 268.4,318.6 265.6,321.4 262.7,319.6" fill="#000"/><polyline points="262.0,328.0 263.3,330.3 264.5,328.0 265.8,330.3 267.1,328.0 268.3,330.3 269.6,328.0 270.9,330.3 272.2,328.0 273.4,330.3 274.7,328.0 276.0,330.3 277.2,328.0 278.5,330.3 279.8,328.0 281.0,330.3" stroke="#00f0ff" stroke-width="0.9" fill="none" opacity="0.75"/><polyline points="262.0,342.9 263.3,345.2 264.5,342.9 265.8,345.2 267.1,342.9 268.3,345.2 269.6,342.9 270.9,345.2 272.2,342.9 273.4,345.2 274.7,342.9 276.0,345.2 277.2,342.9 278.5,345.2 279.8,342.9 281.0,345.2 282.3,342.9" stroke="#00f000" stroke-width="0.8" fill="none"/><polyline points="262.0,345.3 263.3,347.6 264.5,345.3 265.8,347.6 267.1,345.3 268.3,347.6 269.6,345.3 270.9,347.6 272.2,345.3 273.4,347.6 274.7,345.3 276.0,347.6 277.2,345.3 278.5,347.6 279.8,345.3 281.0,347.6 282.3,345.3" stroke="#00f000" stroke-width="0.8" fill="none"/><path d="M265.8,332.5 Q271.9,325.9 278,332.5 L277.4,333.8 Q271.9,335.7 266.4,333.8 z" fill="#ff0000"/><ellipse cx="271.9" cy="332.8" rx="5.2" ry="1.25" fill="#ffee00"/><circle cx="271.9" cy="332.7" r="2.1" fill="#ffee00"/><path d="M271.9,334.9 V344.7" stroke="#ff0000" stroke-width="1.3"/><path d="M271.2,335.9 L264.4,342.3" stroke="#ff0000" stroke-width="1.7"/><path d="M273.3,336.3 L277.3,344.7" stroke="#ff0000" stroke-width="0.9" opacity="0.85"/><polygon points="264.8,340.5 268.4,342.3 265.6,345.1 262.7,343.3" fill="#000"/><polyline points="262.0,351.7 263.3,354.0 264.5,351.7 265.8,354.0 267.1,351.7 268.3,354.0 269.6,351.7 270.9,354.0 272.2,351.7 273.4,354.0 274.7,351.7 276.0,354.0 277.2,351.7 278.5,354.0 279.8,351.7 281.0,354.0" stroke="#00f0ff" stroke-width="0.9" fill="none" opacity="0.75"/><polyline points="262.0,366.6 263.3,368.9 264.5,366.6 265.8,368.9 267.1,366.6 268.3,368.9 269.6,366.6 270.9,368.9 272.2,366.6 273.4,368.9 274.7,366.6 276.0,368.9 277.2,366.6 278.5,368.9 279.8,366.6 281.0,368.9 282.3,366.6" stroke="#00f000" stroke-width="0.8" fill="none"/><polyline points="262.0,369.0 263.3,371.3 264.5,369.0 265.8,371.3 267.1,369.0 268.3,371.3 269.6,369.0 270.9,371.3 272.2,369.0 273.4,371.3 274.7,369.0 276.0,371.3 277.2,369.0 278.5,371.3 279.8,369.0 281.0,371.3 282.3,369.0" stroke="#00f000" stroke-width="0.8" fill="none"/><path d="M265.8,356.2 Q271.9,349.6 278,356.2 L277.4,357.5 Q271.9,359.4 266.4,357.5 z" fill="#000"/><ellipse cx="271.9" cy="356.5" rx="5.2" ry="1.25" fill="#ffee00"/><circle cx="271.9" cy="356.4" r="2.1" fill="#ffee00"/><path d="M271.9,358.6 V368.4" stroke="#000" stroke-width="1.3"/><path d="M271.2,359.6 L264.4,366.0" stroke="#000" stroke-width="1.7"/><path d="M273.3,360.0 L277.3,368.4" stroke="#000" stroke-width="0.9" opacity="0.85"/><polygon points="264.8,364.2 268.4,366.0 265.6,368.8 262.7,367.0" fill="#000"/><polyline points="262.0,375.5 263.3,377.8 264.5,375.5 265.8,377.8 267.1,375.5 268.3,377.8 269.6,375.5 270.9,377.8 272.2,375.5 273.4,377.8 274.7,375.5 276.0,377.8 277.2,375.5 278.5,377.8 279.8,375.5 281.0,377.8" stroke="#00f0ff" stroke-width="0.9" fill="none" opacity="0.75"/><polyline points="262.0,390.4 263.3,392.7 264.5,390.4 265.8,392.7 267.1,390.4 268.3,392.7 269.6,390.4 270.9,392.7 272.2,390.4 273.4,392.7 274.7,390.4 276.0,392.7 277.2,390.4 278.5,392.7 279.8,390.4 281.0,392.7 282.3,390.4" stroke="#00f000" stroke-width="0.8" fill="none"/><polyline points="262.0,392.8 263.3,395.1 264.5,392.8 265.8,395.1 267.1,392.8 268.3,395.1 269.6,392.8 270.9,395.1 272.2,392.8 273.4,395.1 274.7,392.8 276.0,395.1 277.2,392.8 278.5,395.1 279.8,392.8 281.0,395.1 282.3,392.8" stroke="#00f000" stroke-width="0.8" fill="none"/><path d="M265.8,380.0 Q271.9,373.4 278,380.0 L277.4,381.3 Q271.9,383.2 266.4,381.3 z" fill="#000"/><ellipse cx="271.9" cy="380.3" rx="5.2" ry="1.25" fill="#ffee00"/><circle cx="271.9" cy="380.2" r="2.1" fill="#ffee00"/><path d="M271.9,382.4 V392.2" stroke="#000" stroke-width="1.3"/><path d="M271.2,383.4 L264.4,389.8" stroke="#000" stroke-width="1.7"/><path d="M273.3,383.8 L277.3,392.2" stroke="#000" stroke-width="0.9" opacity="0.85"/><polygon points="264.8,388.0 268.4,389.8 265.6,392.6 262.7,390.8" fill="#000"/><polyline points="262.0,399.2 263.3,401.5 264.5,399.2 265.8,401.5 267.1,399.2 268.3,401.5 269.6,399.2 270.9,401.5 272.2,399.2 273.4,401.5 274.7,399.2 276.0,401.5 277.2,399.2 278.5,401.5 279.8,399.2 281.0,401.5" stroke="#00f0ff" stroke-width="0.9" fill="none" opacity="0.75"/><polyline points="262.0,414.1 263.3,416.4 264.5,414.1 265.8,416.4 267.1,414.1 268.3,416.4 269.6,414.1 270.9,416.4 272.2,414.1 273.4,416.4 274.7,414.1 276.0,416.4 277.2,414.1 278.5,416.4 279.8,414.1 281.0,416.4 282.3,414.1" stroke="#00f000" stroke-width="0.8" fill="none"/><polyline points="262.0,416.5 263.3,418.8 264.5,416.5 265.8,418.8 267.1,416.5 268.3,418.8 269.6,416.5 270.9,418.8 272.2,416.5 273.4,418.8 274.7,416.5 276.0,418.8 277.2,416.5 278.5,418.8 279.8,416.5 281.0,418.8 282.3,416.5" stroke="#00f000" stroke-width="0.8" fill="none"/><path d="M265.8,403.7 Q271.9,397.1 278,403.7 L277.4,405.0 Q271.9,406.9 266.4,405.0 z" fill="#000"/><ellipse cx="271.9" cy="404.0" rx="5.2" ry="1.25" fill="#ffee00"/><circle cx="271.9" cy="403.9" r="2.1" fill="#ffee00"/><path d="M271.9,406.1 V415.9" stroke="#000" stroke-width="1.3"/><path d="M271.2,407.1 L264.4,413.5" stroke="#000" stroke-width="1.7"/><path d="M273.3,407.5 L277.3,415.9" stroke="#000" stroke-width="0.9" opacity="0.85"/><polygon points="264.8,411.7 268.4,413.5 265.6,416.3 262.7,414.5" fill="#000"/><polyline points="262.0,422.9 263.3,425.2 264.5,422.9 265.8,425.2 267.1,422.9 268.3,425.2 269.6,422.9 270.9,425.2 272.2,422.9 273.4,425.2 274.7,422.9 276.0,425.2 277.2,422.9 278.5,425.2 279.8,422.9 281.0,425.2" stroke="#00f0ff" stroke-width="0.9" fill="none" opacity="0.75"/><polyline points="262.0,437.8 263.3,440.1 264.5,437.8 265.8,440.1 267.1,437.8 268.3,440.1 269.6,437.8 270.9,440.1 272.2,437.8 273.4,440.1 274.7,437.8 276.0,440.1 277.2,437.8 278.5,440.1 279.8,437.8 281.0,440.1 282.3,437.8" stroke="#00f000" stroke-width="0.8" fill="none"/><polyline points="262.0,440.2 263.3,442.5 264.5,440.2 265.8,442.5 267.1,440.2 268.3,442.5 269.6,440.2 270.9,442.5 272.2,440.2 273.4,442.5 274.7,440.2 276.0,442.5 277.2,440.2 278.5,442.5 279.8,440.2 281.0,442.5 282.3,440.2" stroke="#00f000" stroke-width="0.8" fill="none"/><path d="M265.8,427.4 Q271.9,420.8 278,427.4 L277.4,428.7 Q271.9,430.6 266.4,428.7 z" fill="#000"/><ellipse cx="271.9" cy="427.7" rx="5.2" ry="1.25" fill="#ffee00"/><circle cx="271.9" cy="427.6" r="2.1" fill="#ffee00"/><path d="M271.9,429.8 V439.6" stroke="#000" stroke-width="1.3"/><path d="M271.2,430.8 L264.4,437.2" stroke="#000" stroke-width="1.7"/><path d="M273.3,431.2 L277.3,439.6" stroke="#000" stroke-width="0.9" opacity="0.85"/><polygon points="264.8,435.4 268.4,437.2 265.6,440.0 262.7,438.2" fill="#000"/><polyline points="262.0,446.7 263.3,449.0 264.5,446.7 265.8,449.0 267.1,446.7 268.3,449.0 269.6,446.7 270.9,449.0 272.2,446.7 273.4,449.0 274.7,446.7 276.0,449.0 277.2,446.7 278.5,449.0 279.8,446.7 281.0,449.0" stroke="#00f0ff" stroke-width="0.9" fill="none" opacity="0.75"/><polyline points="262.0,461.6 263.3,463.9 264.5,461.6 265.8,463.9 267.1,461.6 268.3,463.9 269.6,461.6 270.9,463.9 272.2,461.6 273.4,463.9 274.7,461.6 276.0,463.9 277.2,461.6 278.5,463.9 279.8,461.6 281.0,463.9 282.3,461.6" stroke="#00f000" stroke-width="0.8" fill="none"/><polyline points="262.0,464.0 263.3,466.3 264.5,464.0 265.8,466.3 267.1,464.0 268.3,466.3 269.6,464.0 270.9,466.3 272.2,464.0 273.4,466.3 274.7,464.0 276.0,466.3 277.2,464.0 278.5,466.3 279.8,464.0 281.0,466.3 282.3,464.0" stroke="#00f000" stroke-width="0.8" fill="none"/><path d="M265.8,451.2 Q271.9,444.6 278,451.2 L277.4,452.5 Q271.9,454.4 266.4,452.5 z" fill="#000"/><ellipse cx="271.9" cy="451.5" rx="5.2" ry="1.25" fill="#ffee00"/><circle cx="271.9" cy="451.4" r="2.1" fill="#ffee00"/><path d="M271.9,453.6 V463.4" stroke="#000" stroke-width="1.3"/><path d="M271.2,454.6 L264.4,461.0" stroke="#000" stroke-width="1.7"/><path d="M273.3,455.0 L277.3,463.4" stroke="#000" stroke-width="0.9" opacity="0.85"/><polygon points="264.8,459.2 268.4,461.0 265.6,463.8 262.7,462.0" fill="#000"/></g>
</svg>
<span class="t" style="left:272.6px;top:74.8px;font-size:18.5px;font-weight:bold;color:#ffff00;-webkit-text-stroke:0.35px #ffff00;transform-origin:0 0;transform:scaleX(0.8) rotate(0.03deg)">?</span>
<span class="t" style="left:36.40px;top:9.89px;font-size:15px;color:#fff;transform-origin:0 0;transform:scaleX(0.9508) rotate(0.03deg)">GNSS-Auswertung</span>
<span class="t" style="left:9.78px;top:40.68px;font-size:15.6px;color:#000;transform-origin:0 0;transform:scaleX(0.9171) rotate(0.03deg)">Datei</span>
<span class="t" style="left:60.67px;top:40.68px;font-size:15.6px;color:#000;transform-origin:0 0;transform:scaleX(0.9311) rotate(0.03deg)">Bearbeiten</span>
<span class="t" style="left:147.97px;top:40.68px;font-size:15.6px;color:#000;transform-origin:0 0;transform:scaleX(1.0333) rotate(0.03deg)">Hilfe</span>
<span class="t" style="left:60.70px;top:110.49px;font-size:15.2px;color:#000;transform-origin:0 0;transform:scaleX(0.9492) rotate(0.03deg)">Übersicht</span>
<span class="t" style="left:84.20px;top:132.99px;font-size:15.2px;color:#000;transform-origin:0 0;transform:scaleX(1.0121) rotate(0.03deg)">Allgemein</span>
<span class="t" style="left:84.20px;top:155.49px;font-size:15.2px;color:#000;transform-origin:0 0;transform:scaleX(0.9500) rotate(0.03deg)">Zielsystem Lage</span>
<span class="t" style="left:84.20px;top:177.99px;font-size:15.2px;color:#000;transform-origin:0 0;transform:scaleX(0.9690) rotate(0.03deg)">Zielsystem Höhe</span>
<span class="t" style="left:60.80px;top:200.49px;font-size:15.2px;color:#000;transform-origin:0 0;transform:scaleX(0.9146) rotate(0.03deg)">Grafik</span>
<span class="t" style="left:61.00px;top:222.99px;font-size:15.2px;color:#000;transform-origin:0 0;transform:scaleX(0.9861) rotate(0.03deg)">Transformation</span>
<span class="t" style="left:84.40px;top:245.49px;font-size:15.2px;color:#000;transform-origin:0 0;transform:scaleX(0.9316) rotate(0.03deg)">Passpunkte Lage</span>
<span class="t" style="left:84.40px;top:267.99px;font-size:15.2px;color:#000;transform-origin:0 0;transform:scaleX(0.9508) rotate(0.03deg)">Passpunkte Höhe</span>
<span class="t" style="left:60.80px;top:290.49px;font-size:15.2px;color:#000;transform-origin:0 0;transform:scaleX(0.9262) rotate(0.03deg)">GNSS-Messungen</span>
<span class="t" style="left:98.85px;top:312.99px;font-size:15.2px;color:#000;transform-origin:0 0;transform:scaleX(0.9481) rotate(0.03deg)">1. Messung</span>
<span class="t" style="left:98.90px;top:335.49px;font-size:15.2px;color:#000;transform-origin:0 0;transform:scaleX(0.9474) rotate(0.03deg)">2. Messung</span>
<span class="t" style="left:98.90px;top:357.99px;font-size:15.2px;color:#000;transform-origin:0 0;transform:scaleX(0.9474) rotate(0.03deg)">3. Messung</span>
<span class="t" style="left:84.40px;top:380.49px;font-size:15.2px;color:#000;transform-origin:0 0;transform:scaleX(0.9754) rotate(0.03deg)">Auswahl</span>
<span class="t" style="left:60.80px;top:402.99px;font-size:15.2px;color:#000;transform-origin:0 0;transform:scaleX(1.0424) rotate(0.03deg)">Mittelbildung</span>
<span class="t" style="left:60.80px;top:425.49px;font-size:15.2px;color:#000;transform-origin:0 0;transform:scaleX(1.0302) rotate(0.03deg)">Mittelungsprotokoll</span>
<span class="t" style="left:60.80px;top:447.99px;font-size:15.2px;color:#fff;transform-origin:0 0;transform:scaleX(0.9671) rotate(0.03deg)">Vergleich Datenbank</span>
<span class="t" style="left:264.90px;top:113.47px;font-size:15.8px;color:#000;transform-origin:0 0;transform:scaleX(0.8774) rotate(0.03deg)">AKZ</span>
<span class="t" style="left:354.10px;top:113.47px;font-size:15.8px;color:#000;transform-origin:0 0;transform:scaleX(0.8000) rotate(0.03deg)">SK</span>
<span class="t" style="left:386.60px;top:113.47px;font-size:15.8px;color:#000;transform-origin:0 0;transform:scaleX(0.8899) rotate(0.03deg)">Ger. Rechts-Y</span>
<span class="t" style="left:490.30px;top:113.47px;font-size:15.8px;color:#000;transform-origin:0 0;transform:scaleX(0.9384) rotate(0.03deg)">Ger. Hoch-X</span>
<span class="t" style="left:585.51px;top:113.47px;font-size:15.8px;color:#000;transform-origin:0 0;transform:scaleX(0.8911) rotate(0.03deg)">DB Rechts-Y</span>
<span class="t" style="left:686.66px;top:113.47px;font-size:15.8px;color:#000;transform-origin:0 0;transform:scaleX(0.9385) rotate(0.03deg)">DB Hoch-X</span>
<span class="t" style="left:775.74px;top:113.47px;font-size:15.8px;color:#000;transform-origin:0 0;transform:scaleX(0.9585) rotate(0.03deg)">Diff. Y</span>
<span class="t" style="left:830.73px;top:113.47px;font-size:15.8px;color:#000;transform-origin:0 0;transform:scaleX(0.9659) rotate(0.03deg)">Diff. X</span>
<span class="t" style="left:885.77px;top:113.47px;font-size:15.8px;color:#000;transform-origin:0 0;transform:scaleX(0.9333) rotate(0.03deg)">Diff. Lage</span>
<span class="t" style="left:964.40px;top:113.47px;font-size:15.8px;color:#000;transform-origin:0 0;transform:scaleX(0.9000) rotate(0.03deg)">Ger. Höhe</span>
<span class="t" style="left:1044.48px;top:113.47px;font-size:15.8px;color:#000;transform-origin:0 0;transform:scaleX(0.9222) rotate(0.03deg)">DB Höhe</span>
<span class="t" style="left:1117.72px;top:113.47px;font-size:15.8px;color:#000;transform-origin:0 0;transform:scaleX(0.9783) rotate(0.03deg)">Diff. Höhe</span>
<span class="t" style="left:287.66px;top:140.97px;font-size:16.4px;color:#000;transform-origin:0 0;transform:scaleX(0.8201) rotate(0.03deg)">7000081</span>
<span class="t" style="left:363.91px;top:140.97px;font-size:16.4px;color:#000;transform-origin:0 0;transform:scaleX(0.8201) rotate(0.03deg)">2</span>
<span class="t" style="left:396.49px;top:140.97px;font-size:16.4px;color:#000;transform-origin:0 0;transform:scaleX(0.8201) rotate(0.03deg)">2430199.925</span>
<span class="t" style="left:493.09px;top:140.97px;font-size:16.4px;color:#000;transform-origin:0 0;transform:scaleX(0.8201) rotate(0.03deg)">5777707.596</span>
<span class="t" style="left:588.69px;top:140.97px;font-size:16.4px;color:#000;transform-origin:0 0;transform:scaleX(0.8201) rotate(0.03deg)">2430199.933</span>
<span class="t" style="left:682.89px;top:140.97px;font-size:16.4px;color:#000;transform-origin:0 0;transform:scaleX(0.8201) rotate(0.03deg)">5777707.576</span>
<span class="t" style="left:782.94px;top:140.97px;font-size:16.4px;color:#000;transform-origin:0 0;transform:scaleX(0.8201) rotate(0.03deg)">0.008</span>
<span class="t" style="left:833.77px;top:140.97px;font-size:16.4px;color:#000;transform-origin:0 0;transform:scaleX(0.8201) rotate(0.03deg)">-0.020</span>
<span class="t" style="left:915.24px;top:140.97px;font-size:16.4px;color:#000;transform-origin:0 0;transform:scaleX(0.8201) rotate(0.03deg)">0.022</span>
<span class="t" style="left:988.67px;top:140.97px;font-size:16.4px;color:#000;transform-origin:0 0;transform:scaleX(0.8201) rotate(0.03deg)">81.328</span>
<span class="t" style="left:1339.26px;top:140.97px;font-size:16.4px;color:#000;transform-origin:0 0;transform:scaleX(0.8201) rotate(0.03deg)">7000081</span>
<span class="t" style="left:287.66px;top:164.70px;font-size:16.4px;color:#000;transform-origin:0 0;transform:scaleX(0.8201) rotate(0.03deg)">7000399</span>
<span class="t" style="left:363.91px;top:164.70px;font-size:16.4px;color:#000;transform-origin:0 0;transform:scaleX(0.8201) rotate(0.03deg)">2</span>
<span class="t" style="left:396.49px;top:164.70px;font-size:16.4px;color:#000;transform-origin:0 0;transform:scaleX(0.8201) rotate(0.03deg)">2430215.998</span>
<span class="t" style="left:493.09px;top:164.70px;font-size:16.4px;color:#000;transform-origin:0 0;transform:scaleX(0.8201) rotate(0.03deg)">5777788.190</span>
<span class="t" style="left:588.69px;top:164.70px;font-size:16.4px;color:#000;transform-origin:0 0;transform:scaleX(0.8201) rotate(0.03deg)">2430215.991</span>
<span class="t" style="left:682.89px;top:164.70px;font-size:16.4px;color:#000;transform-origin:0 0;transform:scaleX(0.8201) rotate(0.03deg)">5777788.188</span>
<span class="t" style="left:778.47px;top:164.70px;font-size:16.4px;color:#000;transform-origin:0 0;transform:scaleX(0.8201) rotate(0.03deg)">-0.007</span>
<span class="t" style="left:833.77px;top:164.70px;font-size:16.4px;color:#000;transform-origin:0 0;transform:scaleX(0.8201) rotate(0.03deg)">-0.002</span>
<span class="t" style="left:915.24px;top:164.70px;font-size:16.4px;color:#000;transform-origin:0 0;transform:scaleX(0.8201) rotate(0.03deg)">0.008</span>
<span class="t" style="left:988.67px;top:164.70px;font-size:16.4px;color:#000;transform-origin:0 0;transform:scaleX(0.8201) rotate(0.03deg)">81.692</span>
<span class="t" style="left:1339.26px;top:164.70px;font-size:16.4px;color:#000;transform-origin:0 0;transform:scaleX(0.8201) rotate(0.03deg)">7000399</span>
<span class="t" style="left:287.66px;top:188.43px;font-size:16.4px;color:#000;transform-origin:0 0;transform:scaleX(0.8201) rotate(0.03deg)">7000402</span>
<span class="t" style="left:363.91px;top:188.43px;font-size:16.4px;color:#000;transform-origin:0 0;transform:scaleX(0.8201) rotate(0.03deg)">2</span>
<span class="t" style="left:396.49px;top:188.43px;font-size:16.4px;color:#000;transform-origin:0 0;transform:scaleX(0.8201) rotate(0.03deg)">2430269.530</span>
<span class="t" style="left:493.09px;top:188.43px;font-size:16.4px;color:#000;transform-origin:0 0;transform:scaleX(0.8201) rotate(0.03deg)">5777751.865</span>
<span class="t" style="left:588.69px;top:188.43px;font-size:16.4px;color:#000;transform-origin:0 0;transform:scaleX(0.8201) rotate(0.03deg)">2430269.533</span>
<span class="t" style="left:682.89px;top:188.43px;font-size:16.4px;color:#000;transform-origin:0 0;transform:scaleX(0.8201) rotate(0.03deg)">5777751.863</span>
<span class="t" style="left:782.94px;top:188.43px;font-size:16.4px;color:#000;transform-origin:0 0;transform:scaleX(0.8201) rotate(0.03deg)">0.003</span>
<span class="t" style="left:833.77px;top:188.43px;font-size:16.4px;color:#000;transform-origin:0 0;transform:scaleX(0.8201) rotate(0.03deg)">-0.002</span>
<span class="t" style="left:915.24px;top:188.43px;font-size:16.4px;color:#000;transform-origin:0 0;transform:scaleX(0.8201) rotate(0.03deg)">0.004</span>
<span class="t" style="left:988.67px;top:188.43px;font-size:16.4px;color:#000;transform-origin:0 0;transform:scaleX(0.8201) rotate(0.03deg)">81.501</span>
<span class="t" style="left:1339.26px;top:188.43px;font-size:16.4px;color:#000;transform-origin:0 0;transform:scaleX(0.8201) rotate(0.03deg)">7000402</span>
<span class="t" style="left:287.66px;top:212.16px;font-size:16.4px;color:#000;transform-origin:0 0;transform:scaleX(0.8201) rotate(0.03deg)">7000406</span>
<span class="t" style="left:363.91px;top:212.16px;font-size:16.4px;color:#000;transform-origin:0 0;transform:scaleX(0.8201) rotate(0.03deg)">1</span>
<span class="t" style="left:396.49px;top:212.16px;font-size:16.4px;color:#000;transform-origin:0 0;transform:scaleX(0.8201) rotate(0.03deg)">2430237.348</span>
<span class="t" style="left:493.09px;top:212.16px;font-size:16.4px;color:#000;transform-origin:0 0;transform:scaleX(0.8201) rotate(0.03deg)">5777773.704</span>
<span class="t" style="left:588.69px;top:212.16px;font-size:16.4px;color:#000;transform-origin:0 0;transform:scaleX(0.8201) rotate(0.03deg)">2430237.345</span>
<span class="t" style="left:682.89px;top:212.16px;font-size:16.4px;color:#000;transform-origin:0 0;transform:scaleX(0.8201) rotate(0.03deg)">5777773.700</span>
<span class="t" style="left:778.47px;top:212.16px;font-size:16.4px;color:#000;transform-origin:0 0;transform:scaleX(0.8201) rotate(0.03deg)">-0.002</span>
<span class="t" style="left:833.77px;top:212.16px;font-size:16.4px;color:#000;transform-origin:0 0;transform:scaleX(0.8201) rotate(0.03deg)">-0.004</span>
<span class="t" style="left:915.24px;top:212.16px;font-size:16.4px;color:#000;transform-origin:0 0;transform:scaleX(0.8201) rotate(0.03deg)">0.004</span>
<span class="t" style="left:988.67px;top:212.16px;font-size:16.4px;color:#000;transform-origin:0 0;transform:scaleX(0.8201) rotate(0.03deg)">81.584</span>
<span class="t" style="left:1339.26px;top:212.16px;font-size:16.4px;color:#000;transform-origin:0 0;transform:scaleX(0.8201) rotate(0.03deg)">7000406</span>
<span class="t" style="left:287.66px;top:235.89px;font-size:16.4px;color:#000;transform-origin:0 0;transform:scaleX(0.8201) rotate(0.03deg)">7002331</span>
<span class="t" style="left:363.91px;top:235.89px;font-size:16.4px;color:#000;transform-origin:0 0;transform:scaleX(0.8201) rotate(0.03deg)">1</span>
<span class="t" style="left:396.49px;top:235.89px;font-size:16.4px;color:#000;transform-origin:0 0;transform:scaleX(0.8201) rotate(0.03deg)">2430244.702</span>
<span class="t" style="left:493.09px;top:235.89px;font-size:16.4px;color:#000;transform-origin:0 0;transform:scaleX(0.8201) rotate(0.03deg)">5777768.716</span>
<span class="t" style="left:588.69px;top:235.89px;font-size:16.4px;color:#000;transform-origin:0 0;transform:scaleX(0.8201) rotate(0.03deg)">2430244.699</span>
<span class="t" style="left:683.89px;top:235.89px;font-size:16.4px;color:#000;transform-origin:0 0;transform:scaleX(0.8201) rotate(0.03deg)">5777768.711</span>
<span class="t" style="left:778.47px;top:235.89px;font-size:16.4px;color:#000;transform-origin:0 0;transform:scaleX(0.8201) rotate(0.03deg)">-0.003</span>
<span class="t" style="left:833.77px;top:235.89px;font-size:16.4px;color:#000;transform-origin:0 0;transform:scaleX(0.8201) rotate(0.03deg)">-0.005</span>
<span class="t" style="left:915.24px;top:235.89px;font-size:16.4px;color:#000;transform-origin:0 0;transform:scaleX(0.8201) rotate(0.03deg)">0.006</span>
<span class="t" style="left:988.67px;top:235.89px;font-size:16.4px;color:#000;transform-origin:0 0;transform:scaleX(0.8201) rotate(0.03deg)">81.777</span>
<span class="t" style="left:1339.26px;top:235.89px;font-size:16.4px;color:#000;transform-origin:0 0;transform:scaleX(0.8201) rotate(0.03deg)">7002331</span>
<span class="t" style="left:287.66px;top:259.62px;font-size:16.4px;color:#000;transform-origin:0 0;transform:scaleX(0.8201) rotate(0.03deg)">7002332</span>
<span class="t" style="left:363.91px;top:259.62px;font-size:16.4px;color:#000;transform-origin:0 0;transform:scaleX(0.8201) rotate(0.03deg)">1</span>
<span class="t" style="left:396.49px;top:259.62px;font-size:16.4px;color:#000;transform-origin:0 0;transform:scaleX(0.8201) rotate(0.03deg)">2430268.726</span>
<span class="t" style="left:493.09px;top:259.62px;font-size:16.4px;color:#000;transform-origin:0 0;transform:scaleX(0.8201) rotate(0.03deg)">5777752.408</span>
<span class="t" style="left:588.69px;top:259.62px;font-size:16.4px;color:#000;transform-origin:0 0;transform:scaleX(0.8201) rotate(0.03deg)">2430268.727</span>
<span class="t" style="left:682.89px;top:259.62px;font-size:16.4px;color:#000;transform-origin:0 0;transform:scaleX(0.8201) rotate(0.03deg)">5777752.410</span>
<span class="t" style="left:782.94px;top:259.62px;font-size:16.4px;color:#000;transform-origin:0 0;transform:scaleX(0.8201) rotate(0.03deg)">0.002</span>
<span class="t" style="left:838.24px;top:259.62px;font-size:16.4px;color:#000;transform-origin:0 0;transform:scaleX(0.8201) rotate(0.03deg)">0.002</span>
<span class="t" style="left:915.24px;top:259.62px;font-size:16.4px;color:#000;transform-origin:0 0;transform:scaleX(0.8201) rotate(0.03deg)">0.002</span>
<span class="t" style="left:988.67px;top:259.62px;font-size:16.4px;color:#000;transform-origin:0 0;transform:scaleX(0.8201) rotate(0.03deg)">81.583</span>
<span class="t" style="left:1339.26px;top:259.62px;font-size:16.4px;color:#000;transform-origin:0 0;transform:scaleX(0.8201) rotate(0.03deg)">7002332</span>
<span class="t" style="left:287.66px;top:283.35px;font-size:16.4px;color:#000;transform-origin:0 0;transform:scaleX(0.8201) rotate(0.03deg)">7002333</span>
<span class="t" style="left:363.91px;top:283.35px;font-size:16.4px;color:#000;transform-origin:0 0;transform:scaleX(0.8201) rotate(0.03deg)">1</span>
<span class="t" style="left:396.49px;top:283.35px;font-size:16.4px;color:#000;transform-origin:0 0;transform:scaleX(0.8201) rotate(0.03deg)">2430254.380</span>
<span class="t" style="left:493.09px;top:283.35px;font-size:16.4px;color:#000;transform-origin:0 0;transform:scaleX(0.8201) rotate(0.03deg)">5777721.831</span>
<span class="t" style="left:588.69px;top:283.35px;font-size:16.4px;color:#000;transform-origin:0 0;transform:scaleX(0.8201) rotate(0.03deg)">2430254.380</span>
<span class="t" style="left:682.89px;top:283.35px;font-size:16.4px;color:#000;transform-origin:0 0;transform:scaleX(0.8201) rotate(0.03deg)">5777721.831</span>
<span class="t" style="left:782.94px;top:283.35px;font-size:16.4px;color:#000;transform-origin:0 0;transform:scaleX(0.8201) rotate(0.03deg)">0.000</span>
<span class="t" style="left:838.24px;top:283.35px;font-size:16.4px;color:#000;transform-origin:0 0;transform:scaleX(0.8201) rotate(0.03deg)">0.000</span>
<span class="t" style="left:915.24px;top:283.35px;font-size:16.4px;color:#000;transform-origin:0 0;transform:scaleX(0.8201) rotate(0.03deg)">0.000</span>
<span class="t" style="left:988.67px;top:283.35px;font-size:16.4px;color:#000;transform-origin:0 0;transform:scaleX(0.8201) rotate(0.03deg)">81.135</span>
<span class="t" style="left:1339.26px;top:283.35px;font-size:16.4px;color:#000;transform-origin:0 0;transform:scaleX(0.8201) rotate(0.03deg)">7002333</span>
<span class="t" style="left:287.66px;top:307.08px;font-size:16.4px;color:#000;transform-origin:0 0;transform:scaleX(0.8201) rotate(0.03deg)">7002334</span>
<span class="t" style="left:363.91px;top:307.08px;font-size:16.4px;color:#000;transform-origin:0 0;transform:scaleX(0.8201) rotate(0.03deg)">1</span>
<span class="t" style="left:396.49px;top:307.08px;font-size:16.4px;color:#000;transform-origin:0 0;transform:scaleX(0.8201) rotate(0.03deg)">2430243.560</span>
<span class="t" style="left:493.09px;top:307.08px;font-size:16.4px;color:#000;transform-origin:0 0;transform:scaleX(0.8201) rotate(0.03deg)">5777698.769</span>
<span class="t" style="left:588.69px;top:307.08px;font-size:16.4px;color:#000;transform-origin:0 0;transform:scaleX(0.8201) rotate(0.03deg)">2430243.560</span>
<span class="t" style="left:682.89px;top:307.08px;font-size:16.4px;color:#000;transform-origin:0 0;transform:scaleX(0.8201) rotate(0.03deg)">5777698.769</span>
<span class="t" style="left:782.94px;top:307.08px;font-size:16.4px;color:#000;transform-origin:0 0;transform:scaleX(0.8201) rotate(0.03deg)">0.000</span>
<span class="t" style="left:838.24px;top:307.08px;font-size:16.4px;color:#000;transform-origin:0 0;transform:scaleX(0.8201) rotate(0.03deg)">0.000</span>
<span class="t" style="left:915.24px;top:307.08px;font-size:16.4px;color:#000;transform-origin:0 0;transform:scaleX(0.8201) rotate(0.03deg)">0.000</span>
<span class="t" style="left:988.67px;top:307.08px;font-size:16.4px;color:#000;transform-origin:0 0;transform:scaleX(0.8201) rotate(0.03deg)">81.221</span>
<span class="t" style="left:1339.26px;top:307.08px;font-size:16.4px;color:#000;transform-origin:0 0;transform:scaleX(0.8201) rotate(0.03deg)">7002334</span>
<span class="t" style="left:287.66px;top:330.81px;font-size:16.4px;color:#000;transform-origin:0 0;transform:scaleX(0.8201) rotate(0.03deg)">7004124</span>
<span class="t" style="left:363.91px;top:330.81px;font-size:16.4px;color:#000;transform-origin:0 0;transform:scaleX(0.8201) rotate(0.03deg)">1</span>
<span class="t" style="left:396.49px;top:330.81px;font-size:16.4px;color:#000;transform-origin:0 0;transform:scaleX(0.8201) rotate(0.03deg)">2430216.850</span>
<span class="t" style="left:493.09px;top:330.81px;font-size:16.4px;color:#000;transform-origin:0 0;transform:scaleX(0.8201) rotate(0.03deg)">5777704.777</span>
<span class="t" style="left:588.69px;top:330.81px;font-size:16.4px;color:#000;transform-origin:0 0;transform:scaleX(0.8201) rotate(0.03deg)">2430216.850</span>
<span class="t" style="left:682.89px;top:330.81px;font-size:16.4px;color:#000;transform-origin:0 0;transform:scaleX(0.8201) rotate(0.03deg)">5777704.777</span>
<span class="t" style="left:778.47px;top:330.81px;font-size:16.4px;color:#000;transform-origin:0 0;transform:scaleX(0.8201) rotate(0.03deg)">-0.000</span>
<span class="t" style="left:833.77px;top:330.81px;font-size:16.4px;color:#000;transform-origin:0 0;transform:scaleX(0.8201) rotate(0.03deg)">-0.000</span>
<span class="t" style="left:915.24px;top:330.81px;font-size:16.4px;color:#000;transform-origin:0 0;transform:scaleX(0.8201) rotate(0.03deg)">0.001</span>
<span class="t" style="left:988.67px;top:330.81px;font-size:16.4px;color:#000;transform-origin:0 0;transform:scaleX(0.8201) rotate(0.03deg)">81.001</span>
<span class="t" style="left:1339.26px;top:330.81px;font-size:16.4px;color:#000;transform-origin:0 0;transform:scaleX(0.8201) rotate(0.03deg)">7004124</span>
<span class="t" style="left:287.66px;top:354.54px;font-size:16.4px;color:#000;transform-origin:0 0;transform:scaleX(0.8201) rotate(0.03deg)">7800010</span>
<span class="t" style="left:363.91px;top:354.54px;font-size:16.4px;color:#000;transform-origin:0 0;transform:scaleX(0.8201) rotate(0.03deg)">5</span>
<span class="t" style="left:396.49px;top:354.54px;font-size:16.4px;color:#000;transform-origin:0 0;transform:scaleX(0.8201) rotate(0.03deg)">2430182.355</span>
<span class="t" style="left:493.09px;top:354.54px;font-size:16.4px;color:#000;transform-origin:0 0;transform:scaleX(0.8201) rotate(0.03deg)">5777710.790</span>
<span class="t" style="left:588.69px;top:354.54px;font-size:16.4px;color:#000;transform-origin:0 0;transform:scaleX(0.8201) rotate(0.03deg)">2430182.361</span>
<span class="t" style="left:682.89px;top:354.54px;font-size:16.4px;color:#000;transform-origin:0 0;transform:scaleX(0.8201) rotate(0.03deg)">5777710.791</span>
<span class="t" style="left:782.94px;top:354.54px;font-size:16.4px;color:#000;transform-origin:0 0;transform:scaleX(0.8201) rotate(0.03deg)">0.006</span>
<span class="t" style="left:838.24px;top:354.54px;font-size:16.4px;color:#000;transform-origin:0 0;transform:scaleX(0.8201) rotate(0.03deg)">0.001</span>
<span class="t" style="left:915.24px;top:354.54px;font-size:16.4px;color:#000;transform-origin:0 0;transform:scaleX(0.8201) rotate(0.03deg)">0.006</span>
<span class="t" style="left:988.67px;top:354.54px;font-size:16.4px;color:#000;transform-origin:0 0;transform:scaleX(0.8201) rotate(0.03deg)">81.602</span>
<span class="t" style="left:1339.26px;top:354.54px;font-size:16.4px;color:#000;transform-origin:0 0;transform:scaleX(0.8201) rotate(0.03deg)">7800010</span>
<span class="t" style="left:288.66px;top:378.27px;font-size:16.4px;color:#000;transform-origin:0 0;transform:scaleX(0.8201) rotate(0.03deg)">7800011</span>
<span class="t" style="left:363.91px;top:378.27px;font-size:16.4px;color:#000;transform-origin:0 0;transform:scaleX(0.8201) rotate(0.03deg)">5</span>
<span class="t" style="left:396.49px;top:378.27px;font-size:16.4px;color:#000;transform-origin:0 0;transform:scaleX(0.8201) rotate(0.03deg)">2430269.390</span>
<span class="t" style="left:493.09px;top:378.27px;font-size:16.4px;color:#000;transform-origin:0 0;transform:scaleX(0.8201) rotate(0.03deg)">5777682.357</span>
<span class="t" style="left:588.69px;top:378.27px;font-size:16.4px;color:#000;transform-origin:0 0;transform:scaleX(0.8201) rotate(0.03deg)">2430269.390</span>
<span class="t" style="left:682.89px;top:378.27px;font-size:16.4px;color:#000;transform-origin:0 0;transform:scaleX(0.8201) rotate(0.03deg)">5777682.359</span>
<span class="t" style="left:778.47px;top:378.27px;font-size:16.4px;color:#000;transform-origin:0 0;transform:scaleX(0.8201) rotate(0.03deg)">-0.000</span>
<span class="t" style="left:838.24px;top:378.27px;font-size:16.4px;color:#000;transform-origin:0 0;transform:scaleX(0.8201) rotate(0.03deg)">0.002</span>
<span class="t" style="left:915.24px;top:378.27px;font-size:16.4px;color:#000;transform-origin:0 0;transform:scaleX(0.8201) rotate(0.03deg)">0.002</span>
<span class="t" style="left:988.67px;top:378.27px;font-size:16.4px;color:#000;transform-origin:0 0;transform:scaleX(0.8201) rotate(0.03deg)">81.075</span>
<span class="t" style="left:1340.26px;top:378.27px;font-size:16.4px;color:#000;transform-origin:0 0;transform:scaleX(0.8201) rotate(0.03deg)">7800011</span>
<span class="t" style="left:287.66px;top:402.00px;font-size:16.4px;color:#000;transform-origin:0 0;transform:scaleX(0.8201) rotate(0.03deg)">7800012</span>
<span class="t" style="left:363.91px;top:402.00px;font-size:16.4px;color:#000;transform-origin:0 0;transform:scaleX(0.8201) rotate(0.03deg)">5</span>
<span class="t" style="left:396.49px;top:402.00px;font-size:16.4px;color:#000;transform-origin:0 0;transform:scaleX(0.8201) rotate(0.03deg)">2430281.506</span>
<span class="t" style="left:493.09px;top:402.00px;font-size:16.4px;color:#000;transform-origin:0 0;transform:scaleX(0.8201) rotate(0.03deg)">5777752.477</span>
<span class="t" style="left:588.69px;top:402.00px;font-size:16.4px;color:#000;transform-origin:0 0;transform:scaleX(0.8201) rotate(0.03deg)">2430281.500</span>
<span class="t" style="left:682.89px;top:402.00px;font-size:16.4px;color:#000;transform-origin:0 0;transform:scaleX(0.8201) rotate(0.03deg)">5777752.482</span>
<span class="t" style="left:778.47px;top:402.00px;font-size:16.4px;color:#000;transform-origin:0 0;transform:scaleX(0.8201) rotate(0.03deg)">-0.006</span>
<span class="t" style="left:838.24px;top:402.00px;font-size:16.4px;color:#000;transform-origin:0 0;transform:scaleX(0.8201) rotate(0.03deg)">0.005</span>
<span class="t" style="left:915.24px;top:402.00px;font-size:16.4px;color:#000;transform-origin:0 0;transform:scaleX(0.8201) rotate(0.03deg)">0.007</span>
<span class="t" style="left:988.67px;top:402.00px;font-size:16.4px;color:#000;transform-origin:0 0;transform:scaleX(0.8201) rotate(0.03deg)">81.650</span>
<span class="t" style="left:1339.26px;top:402.00px;font-size:16.4px;color:#000;transform-origin:0 0;transform:scaleX(0.8201) rotate(0.03deg)">7800012</span>
<span class="t" style="left:287.66px;top:425.73px;font-size:16.4px;color:#000;transform-origin:0 0;transform:scaleX(0.8201) rotate(0.03deg)">7800013</span>
<span class="t" style="left:363.91px;top:425.73px;font-size:16.4px;color:#000;transform-origin:0 0;transform:scaleX(0.8201) rotate(0.03deg)">5</span>
<span class="t" style="left:396.49px;top:425.73px;font-size:16.4px;color:#000;transform-origin:0 0;transform:scaleX(0.8201) rotate(0.03deg)">2430239.427</span>
<span class="t" style="left:493.09px;top:425.73px;font-size:16.4px;color:#000;transform-origin:0 0;transform:scaleX(0.8201) rotate(0.03deg)">5777783.997</span>
<span class="t" style="left:588.69px;top:425.73px;font-size:16.4px;color:#000;transform-origin:0 0;transform:scaleX(0.8201) rotate(0.03deg)">2430239.424</span>
<span class="t" style="left:682.89px;top:425.73px;font-size:16.4px;color:#000;transform-origin:0 0;transform:scaleX(0.8201) rotate(0.03deg)">5777783.995</span>
<span class="t" style="left:778.47px;top:425.73px;font-size:16.4px;color:#000;transform-origin:0 0;transform:scaleX(0.8201) rotate(0.03deg)">-0.004</span>
<span class="t" style="left:833.77px;top:425.73px;font-size:16.4px;color:#000;transform-origin:0 0;transform:scaleX(0.8201) rotate(0.03deg)">-0.001</span>
<span class="t" style="left:915.24px;top:425.73px;font-size:16.4px;color:#000;transform-origin:0 0;transform:scaleX(0.8201) rotate(0.03deg)">0.004</span>
<span class="t" style="left:988.67px;top:425.73px;font-size:16.4px;color:#000;transform-origin:0 0;transform:scaleX(0.8201) rotate(0.03deg)">81.761</span>
<span class="t" style="left:1339.26px;top:425.73px;font-size:16.4px;color:#000;transform-origin:0 0;transform:scaleX(0.8201) rotate(0.03deg)">7800013</span>
<span class="t" style="left:284.34px;top:449.46px;font-size:16.4px;color:#000;transform-origin:0 0;transform:scaleX(0.8597) rotate(0.03deg)">15811111</span>
<span class="t" style="left:363.91px;top:449.46px;font-size:16.4px;color:#000;transform-origin:0 0;transform:scaleX(0.8201) rotate(0.03deg)">2</span>
<span class="t" style="left:396.49px;top:449.46px;font-size:16.4px;color:#000;transform-origin:0 0;transform:scaleX(0.8201) rotate(0.03deg)">2431849.862</span>
<span class="t" style="left:493.09px;top:449.46px;font-size:16.4px;color:#000;transform-origin:0 0;transform:scaleX(0.8201) rotate(0.03deg)">5755372.847</span>
<span class="t" style="left:588.69px;top:449.46px;font-size:16.4px;color:#000;transform-origin:0 0;transform:scaleX(0.8201) rotate(0.03deg)">2431849.862</span>
<span class="t" style="left:682.89px;top:449.46px;font-size:16.4px;color:#000;transform-origin:0 0;transform:scaleX(0.8201) rotate(0.03deg)">5755372.852</span>
<span class="t" style="left:778.47px;top:449.46px;font-size:16.4px;color:#000;transform-origin:0 0;transform:scaleX(0.8201) rotate(0.03deg)">-0.000</span>
<span class="t" style="left:838.24px;top:449.46px;font-size:16.4px;color:#000;transform-origin:0 0;transform:scaleX(0.8201) rotate(0.03deg)">0.005</span>
<span class="t" style="left:915.24px;top:449.46px;font-size:16.4px;color:#000;transform-origin:0 0;transform:scaleX(0.8201) rotate(0.03deg)">0.005</span>
<span class="t" style="left:988.67px;top:449.46px;font-size:16.4px;color:#000;transform-origin:0 0;transform:scaleX(0.8201) rotate(0.03deg)">55.328</span>
<span class="t" style="left:1062.97px;top:449.46px;font-size:16.4px;color:#000;transform-origin:0 0;transform:scaleX(0.8201) rotate(0.03deg)">55.346</span>
<span class="t" style="left:1152.44px;top:449.46px;font-size:16.4px;color:#000;transform-origin:0 0;transform:scaleX(0.8201) rotate(0.03deg)">0.018</span>
<span class="t" style="left:1332.54px;top:449.46px;font-size:16.4px;color:#000;transform-origin:0 0;transform:scaleX(0.8597) rotate(0.03deg)">15811111</span>
</body></html>
